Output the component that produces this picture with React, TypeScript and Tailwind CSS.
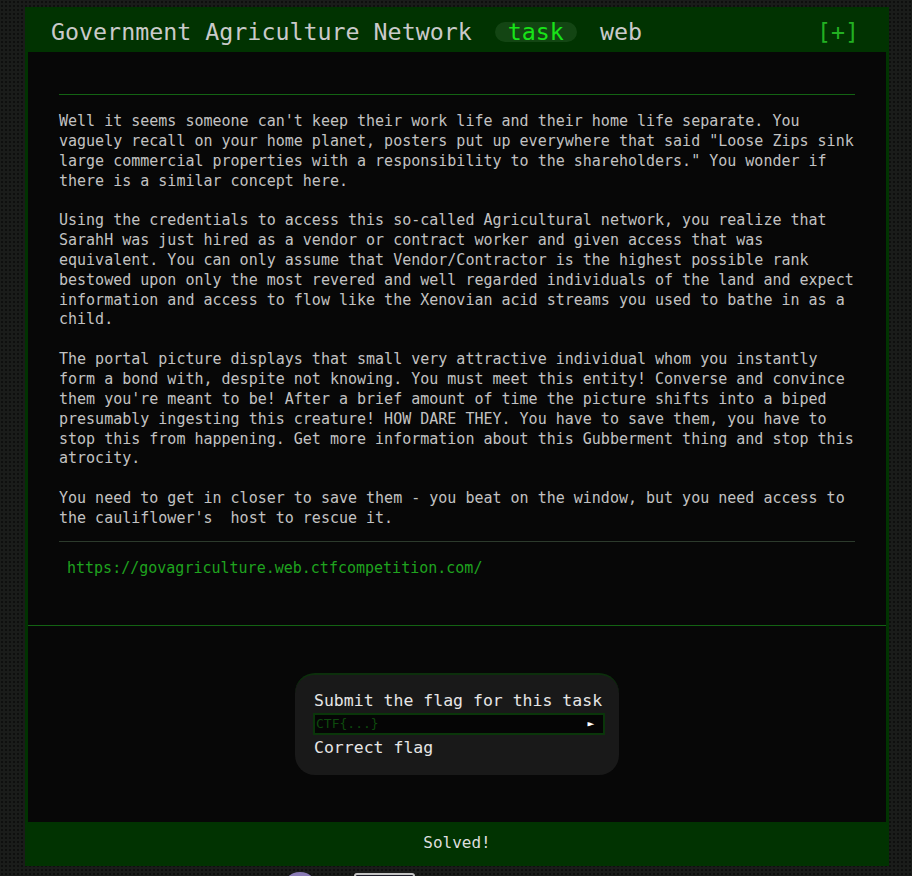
import React from "react";

const mono = "font-['DejaVu_Sans_Mono','Liberation_Mono',monospace]";

const paragraphs = [
  "Well it seems someone can't keep their work life and their home life separate. You vaguely recall on your home planet, posters put up everywhere that said \"Loose Zips sink large commercial properties with a responsibility to the shareholders.\" You wonder if there is a similar concept here.",
  "Using the credentials to access this so-called Agricultural network, you realize that SarahH was just hired as a vendor or contract worker and given access that was equivalent. You can only assume that Vendor/Contractor is the highest possible rank bestowed upon only the most revered and well regarded individuals of the land and expect information and access to flow like the Xenovian acid streams you used to bathe in as a child.",
  "The portal picture displays that small very attractive individual whom you instantly form a bond with, despite not knowing. You must meet this entity! Converse and convince them you're meant to be! After a brief amount of time the picture shifts into a biped presumably ingesting this creature! HOW DARE THEY. You have to save them, you have to stop this from happening. Get more information about this Gubberment thing and stop this atrocity.",
  "You need to get in closer to save them - you beat on the window, but you need access to the cauliflower's\u00a0 host to rescue it.",
];

export default function App() {
  return (
    <div className={`min-h-[876px] overflow-hidden bg-[#1a1c1a] bg-[radial-gradient(#0e0f0e_1px,transparent_1.2px)] bg-[length:4px_4px] ${mono}`}>
      <div className="ml-[25px] mt-[7px] w-[864px] bg-[#013301]">
        <header className="flex h-[45px] items-center pl-[26px] pr-[30px] pt-[4px] text-[23.3px] leading-[20px] text-[#cacaca]">
          <span>Government Agriculture Network</span>
          <span className="ml-[23px] rounded-full bg-[#134513] px-[13px] py-0 text-[#18e418]">task</span>
          <span className="ml-[23px]">web</span>
          <span className="ml-auto text-[#22b022]">[+]</span>
        </header>

        <div className="mx-[3px] bg-[#070707]">
          <section className="border-b border-[#136313] px-[31px] pb-[47px] pt-[42px]">
            <div className="h-px bg-[#136313]" />
            <div className="space-y-[19.85px] pt-[17px] text-[15px] leading-[19.85px] text-[#c2c2c2]">
              {paragraphs.map((p, i) => (
                <p key={i} className="whitespace-pre-wrap">{p}</p>
              ))}
            </div>
            <div className="mt-[12px] h-px bg-[#2c3a2c]" />
            <a href="#" className="mt-[16px] block pl-[8px] text-[15px] leading-[20px] text-[#1fa31f]">
              https://govagriculture.web.ctfcompetition.com/
            </a>
          </section>

          <section className="flex h-[196px] items-center justify-center">
            <div className="w-[324px] whitespace-nowrap rounded-[20px] border-t-2 border-[#0c2f0c] bg-[#191919] pb-[16px] pl-[19px] pr-[14px] pt-[15px] text-[16.5px] leading-[22px] text-[#e6e6e6]">
              <div>Submit the flag for this task</div>
              <div className="-ml-px mt-[1px] flex h-[22px] items-center border-2 border-[#0a360a] bg-[#050505] pl-[1px] pr-[9px]">
                <span className="flex-1 text-[13px] leading-[16px] text-[#0d4a0d]">CTF{"{...}"}</span>
                <span className="text-[11px] leading-[10px] text-white">►</span>
              </div>
              <div className="mt-[2px]">Correct flag</div>
            </div>
          </section>
        </div>

        <footer className="flex h-[44px] items-center justify-center pb-px text-[16px] text-[#dedede]">
          Solved!
        </footer>
      </div>

      <div className="ml-[282px] mt-[6px] flex items-start gap-[36px]">
        <div className="h-[36px] w-[36px] rounded-full bg-[#8a7bb6]" />
        <div className="mt-[1px] h-[30px] w-[61px] rounded-[3px] border-2 border-[#c4c4c4] bg-[#1d1d29]" />
      </div>
    </div>
  );
}
